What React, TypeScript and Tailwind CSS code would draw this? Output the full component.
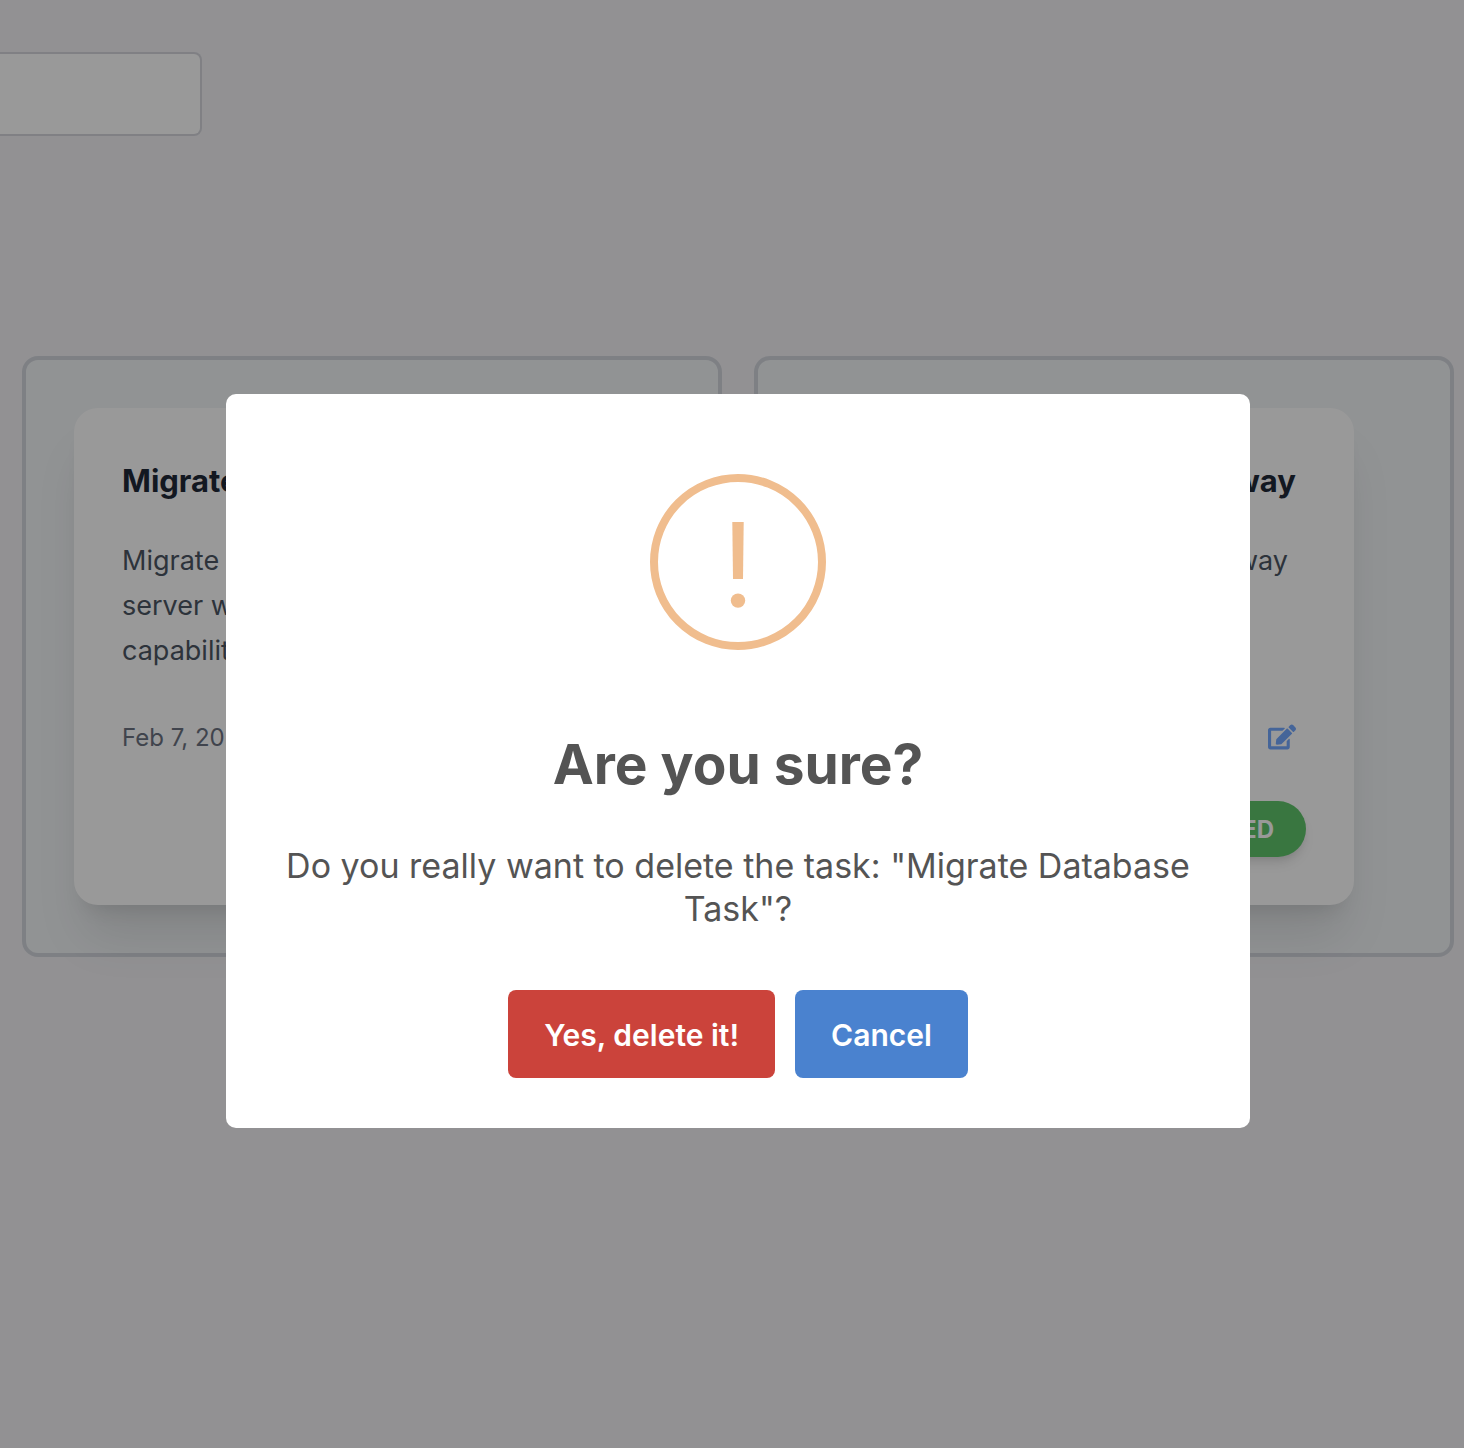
import type { ReactNode } from "react";
import { FaEdit } from "react-icons/fa";

type TaskCardProps = {
  title: string;
  date?: string;
  status?: string;
  alignEnd?: boolean;
  children: ReactNode;
};

function TaskCard({ title, date, status, alignEnd, children }: TaskCardProps) {
  return (
    <section className="rounded-2xl border-4 border-[#d3d6dd] bg-[#f2f5f7] p-12">
      <article className="max-w-[548px] rounded-3xl bg-white p-12 shadow-[0_40px_50px_-10px_rgba(0,0,0,0.1),0_16px_20px_-12px_rgba(0,0,0,0.1)]">
        <h3
          className={
            alignEnd
              ? "mb-8 pr-[10px] text-right text-[31px] leading-[50px] font-bold text-[#1f2937]"
              : "mb-8 text-[31px] leading-[50px] font-bold text-[#1f2937]"
          }
        >
          {title}
        </h3>
        <p
          className={
            alignEnd
              ? "min-h-[136px] pr-[18px] text-right text-[27px] leading-[45px] text-[#4b5563]"
              : "min-h-[136px] text-[27px] leading-[45px] text-[#4b5563]"
          }
        >
          {children}
        </p>
        <div className="mt-12 flex h-8 items-center justify-between pr-[10px]">
          {date && <time className="text-2xl text-[#6b7280]">{date}</time>}
          <button type="button" aria-label={"Edit " + title} className="ml-auto pb-0.5 text-[#74a9ff]">
            <FaEdit className="size-7" />
          </button>
        </div>
        <div className="mt-[47px] flex h-14 justify-end">
          {status && (
            <span className="flex items-center rounded-full bg-[#5fc56c] px-8 pt-0.5 text-2xl font-bold text-white shadow-[0_8px_12px_-2px_rgba(0,0,0,0.1),0_4px_8px_-4px_rgba(0,0,0,0.1)]">
              {status}
            </span>
          )}
        </div>
      </article>
    </section>
  );
}

function ConfirmDialog() {
  return (
    <div className="fixed inset-0 flex items-center justify-center bg-black/40 pt-[74px] pl-3">
      <div
        role="dialog"
        aria-modal="true"
        aria-labelledby="confirm-title"
        aria-describedby="confirm-text"
        className="flex w-full max-w-5xl flex-col items-center rounded-[10px] bg-white px-12 pt-20 pb-[50px] text-[#545454]"
      >
        <svg viewBox="0 0 176 176" className="size-44" fill="#f0bd8e" aria-hidden="true">
          <circle cx="88" cy="88" r="84" fill="none" stroke="#f0bd8e" strokeWidth="8" />
          <path d="M82.300 48H93.700L93 105H83Z" />
          <circle cx="88" cy="126.600" r="7.200" />
        </svg>
        <h2 id="confirm-title" className="mt-[78px] text-center text-[55px] leading-[72px] font-bold">
          Are you sure?
        </h2>
        <p id="confirm-text" className="mt-11 text-center text-[34px] leading-[43px]">
          Do you really want to delete the task: "Migrate Database Task"?
        </p>
        <div className="mt-[60px] flex gap-5">
          <button
            type="button"
            className="h-[88px] rounded-lg bg-[#cb433b] px-9 pt-0.5 text-[30px] font-semibold text-white"
          >
            Yes, delete it!
          </button>
          <button
            type="button"
            className="h-[88px] rounded-lg bg-[#4a82cf] px-9 pt-0.5 text-[30px] font-semibold text-white"
          >
            Cancel
          </button>
        </div>
      </div>
    </div>
  );
}

export default function App() {
  return (
    <div className="min-h-screen bg-[#f3f2f5] pt-[52px] font-['Inter',sans-serif]">
      <input
        type="text"
        aria-label="Search tasks"
        className="block h-[84px] w-[202px] rounded-r-lg border-2 border-l-0 border-[#d5d6dd] bg-white px-6 text-[27px]"
      />
      <main className="mt-[220px] grid grid-cols-2 gap-8 pr-[10px] pl-[22px]">
        <TaskCard title="Migrate Database Task" date="Feb 7, 2025">
          Migrate
          <br />
          server with
          <br />
          capabilities
        </TaskCard>
        <TaskCard title="Payment Gateway" status="COMPLETED" alignEnd>
          Payment gateway
        </TaskCard>
      </main>
      <ConfirmDialog />
    </div>
  );
}
